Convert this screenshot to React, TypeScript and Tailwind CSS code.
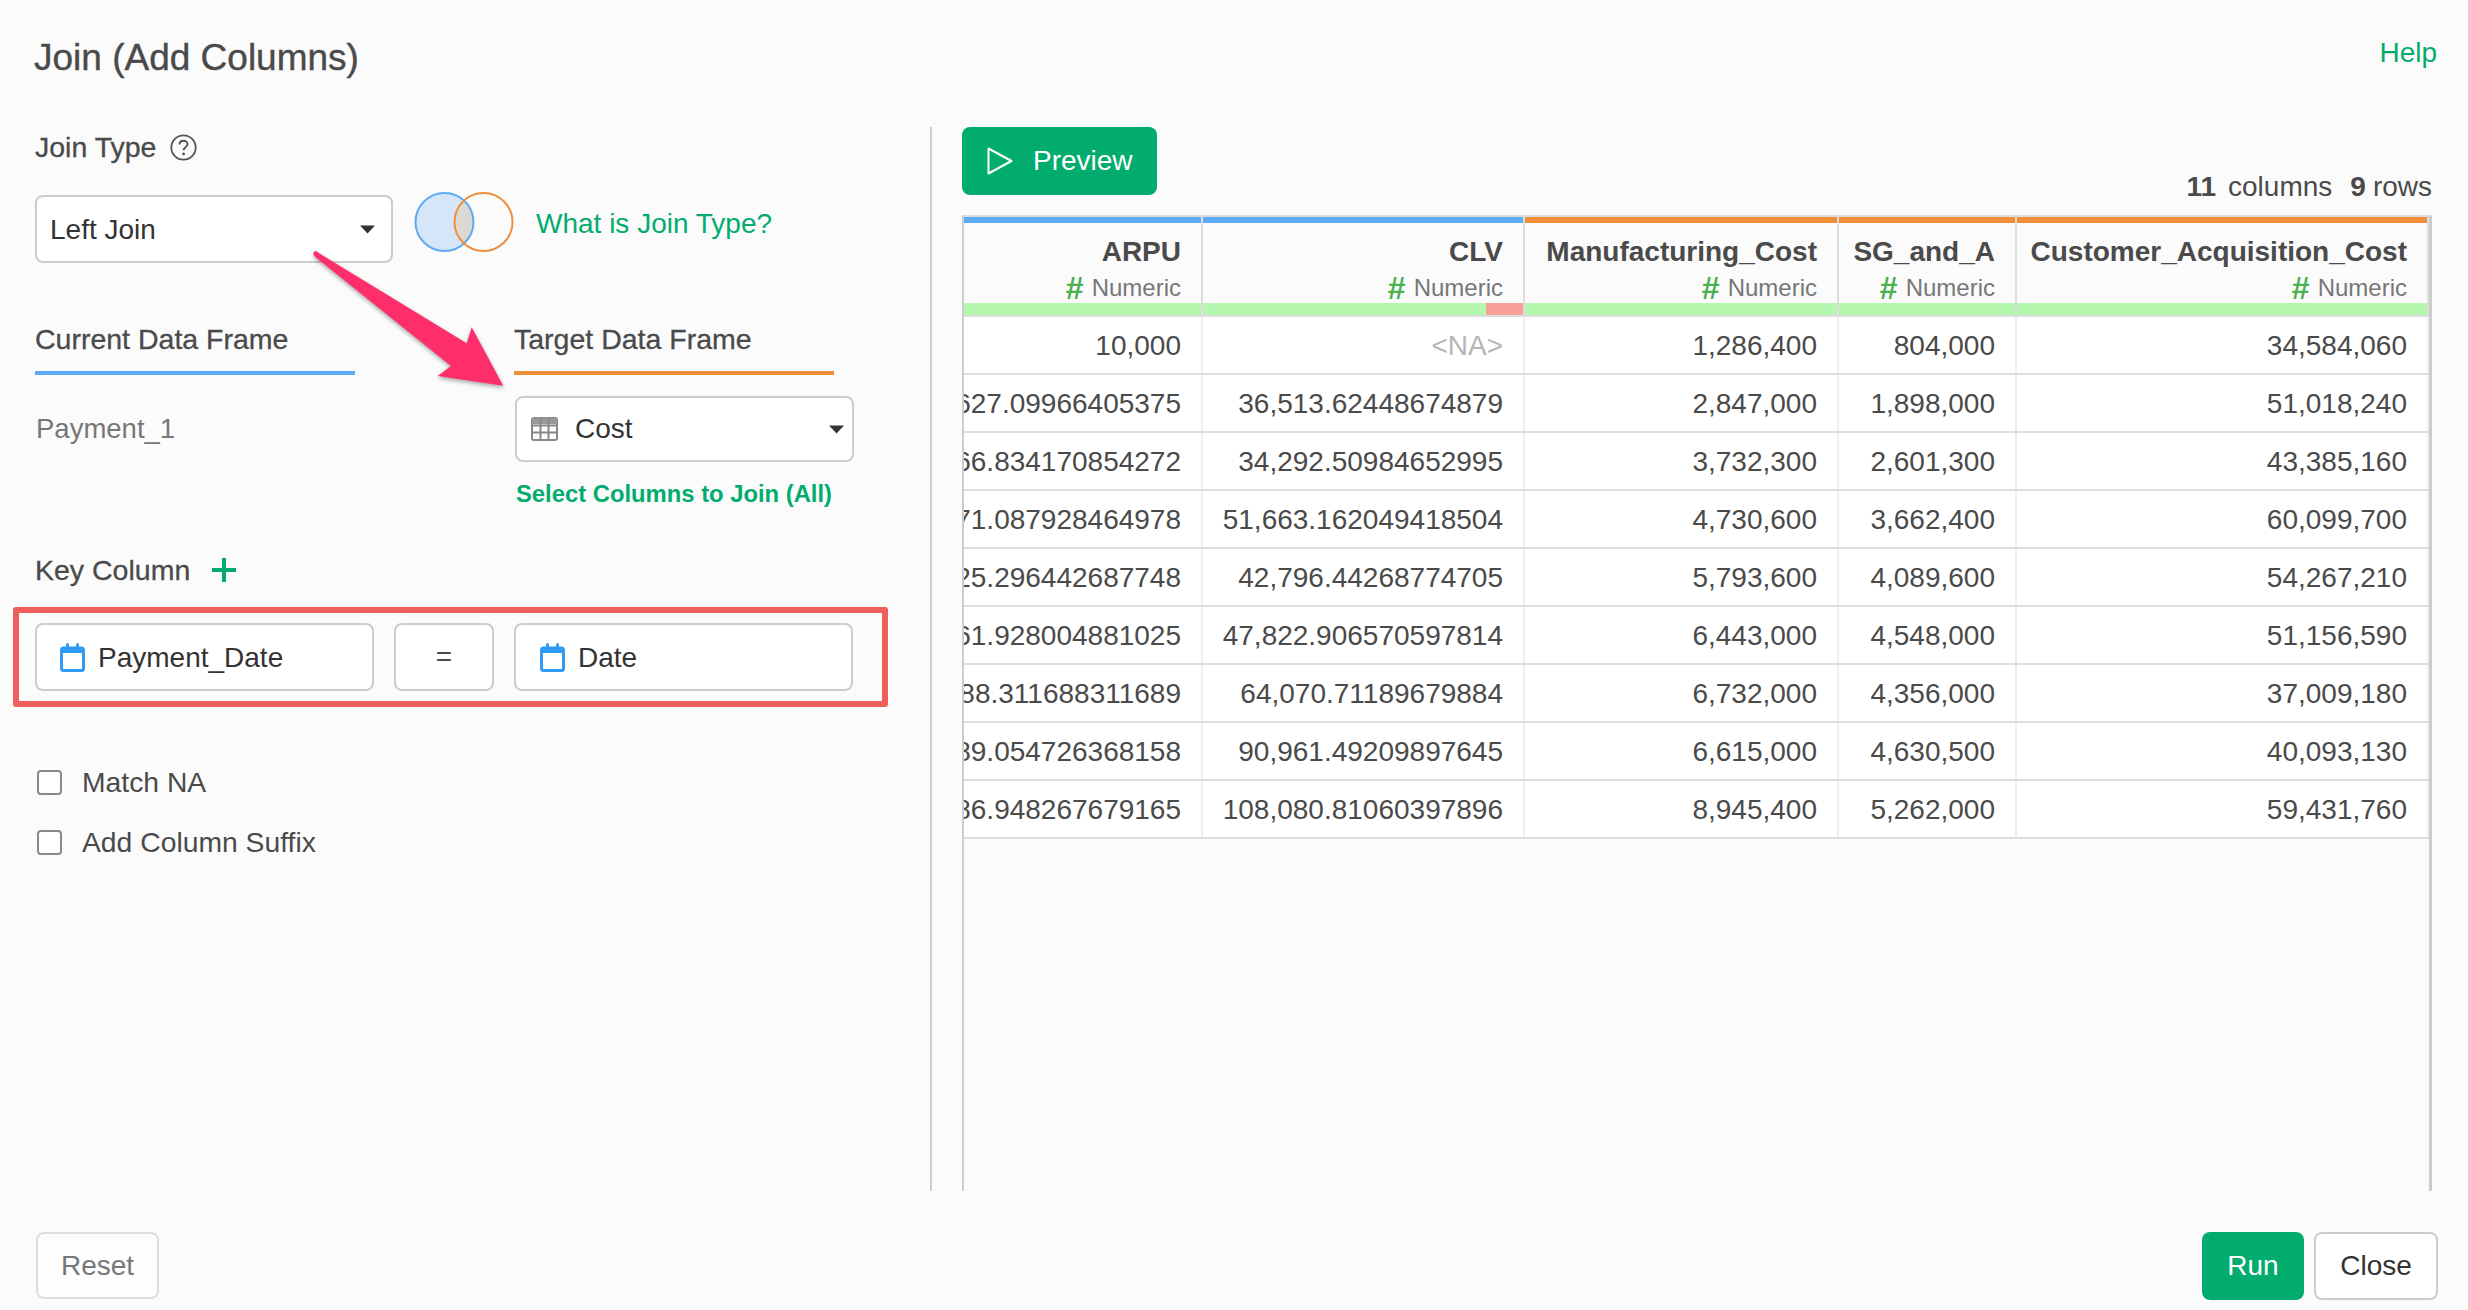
import React from 'react';

const columns = [
  { name: 'ARPU', width: 'w-[239px]', bar: 'bg-[#5dabf4]' },
  { name: 'CLV', width: 'w-[322px]', bar: 'bg-[#5dabf4]', missing: true },
  { name: 'Manufacturing_Cost', width: 'w-[314px]', bar: 'bg-[#ef8f3c]' },
  { name: 'SG_and_A', width: 'w-[178px]', bar: 'bg-[#ef8f3c]' },
  { name: 'Customer_Acquisition_Cost', width: 'w-[412px]', bar: 'bg-[#ef8f3c]' },
];

const rows = [
  ['10,000', '<NA>', '1,286,400', '804,000', '34,584,060'],
  ['627.09966405375', '36,513.62448674879', '2,847,000', '1,898,000', '51,018,240'],
  ['66.834170854272', '34,292.50984652995', '3,732,300', '2,601,300', '43,385,160'],
  ['71.087928464978', '51,663.162049418504', '4,730,600', '3,662,400', '60,099,700'],
  ['25.296442687748', '42,796.44268774705', '5,793,600', '4,089,600', '54,267,210'],
  ['61.928004881025', '47,822.906570597814', '6,443,000', '4,548,000', '51,156,590'],
  ['88.311688311689', '64,070.71189679884', '6,732,000', '4,356,000', '37,009,180'],
  ['89.054726368158', '90,961.49209897645', '6,615,000', '4,630,500', '40,093,130'],
  ['86.948267679165', '108,080.81060397896', '8,945,400', '5,262,000', '59,431,760'],
];

function Caret() {
  return (
    <svg width="15" height="9" viewBox="0 0 15 9" className="shrink-0">
      <path d="M0 0.5H15L7.5 8.5Z" fill="#333333" />
    </svg>
  );
}

function CalendarIcon() {
  return (
    <svg width="25" height="29" viewBox="0 0 25 29" className="shrink-0">
      <rect x="1.5" y="5" width="22" height="22.5" rx="2" fill="none" stroke="#2f9bf5" strokeWidth="3" />
      <rect x="1" y="4" width="23" height="6" rx="1.5" fill="#2f9bf5" />
      <rect x="6" y="0" width="3" height="6" rx="1.5" fill="#2f9bf5" />
      <rect x="16" y="0" width="3" height="6" rx="1.5" fill="#2f9bf5" />
    </svg>
  );
}

function TableIcon() {
  return (
    <svg width="27" height="24" viewBox="0 0 27 24" className="shrink-0">
      <rect x="1" y="1" width="25" height="22" rx="2" fill="none" stroke="#888888" strokeWidth="2" />
      <rect x="1" y="1" width="25" height="6" fill="#999999" />
      <path d="M9.5 1V23M17.5 1V23M1 8.5H26M1 15.5H26" stroke="#888888" strokeWidth="2" fill="none" />
    </svg>
  );
}

function KeyBox({ label, width, pad }: { label: string; width: string; pad: string }) {
  return (
    <div className={`${width} ${pad} h-[68px] flex items-center gap-[13px] bg-white border-2 border-[#cccccc] rounded-[8px] text-[#333333]`}>
      <CalendarIcon />
      <span className="pt-[2px]">{label}</span>
    </div>
  );
}

function Check({ label }: { label: string }) {
  return (
    <div className="h-[26px] flex items-center gap-[20px] pl-[2px] text-[28.3px] text-[#4a4a4a]">
      <div className="w-[25px] h-[25px] bg-white border-2 border-[#888888] rounded-[4px]" />
      <span>{label}</span>
    </div>
  );
}

export default function App() {
  return (
    <div className="relative w-[2468px] h-[1310px] overflow-hidden flex flex-col bg-[#fbfbfb] [font-family:Liberation_Sans,sans-serif] text-[28px] leading-[32px] text-[#4a4a4a]">
      {/* Header */}
      <div className="h-[127px] flex items-start justify-between pl-[34px] pr-[31px]">
        <div className="mt-[36px] text-[37px] leading-[44px] [-webkit-text-stroke:0.4px_#4a4a4a]">Join (Add Columns)</div>
        <div className="mt-[37px] text-[#02ac6e]">Help</div>
      </div>

      <div className="h-[1064px] flex">
        {/* Left: join settings */}
        <div className="w-[932px] border-r-2 border-[#cccccc] pl-[35px]">
          <div className="h-[40px] flex items-center gap-[14px] text-[28.5px] [-webkit-text-stroke:0.3px_#4a4a4a]">
            <span>Join Type</span>
            <svg width="27" height="27" viewBox="0 0 27 27" className="shrink-0">
              <circle cx="13.5" cy="13.5" r="12.2" fill="none" stroke="#555555" strokeWidth="1.8" />
              <path d="M9.5 10.6c0-2.4 1.800-3.800 4-3.800s4 1.400 4 3.400c0 1.700-1 2.500-2.200 3.300-1.100.7-1.700 1.300-1.700 2.800" fill="none" stroke="#555555" strokeWidth="2" />
              <circle cx="13.600" cy="20" r="1.400" fill="#555555" />
            </svg>
          </div>

          <div className="mt-[28px] h-[68px] flex items-center">
            <div className="w-[358px] h-[68px] flex items-center justify-between pl-[13px] pr-[16px] bg-white border-2 border-[#cccccc] rounded-[8px] text-[#333333]">
              <span className="pt-[1px]">Left Join</span>
              <Caret />
            </div>
            <svg width="100" height="62" viewBox="0 0 100 62" className="ml-[21px] -mt-[14px] shrink-0">
              <circle cx="30.500" cy="31" r="29" fill="#d6e6f9" />
              <path d="M50 9.500a29 29 0 0 1 0 43a29 29 0 0 1 0-43Z" fill="#dcd8d2" />
              <circle cx="30.500" cy="31" r="29" fill="none" stroke="#5dabf4" strokeWidth="2" />
              <circle cx="69.500" cy="31" r="29" fill="none" stroke="#ef8f3c" strokeWidth="2" />
            </svg>
            <span className="ml-[22px] -mt-[10px] text-[#02ac6e]">What is Join Type?</span>
          </div>

          <div className="mt-[62px] flex text-[28.5px] leading-[28px]">
            <div className="w-[320px] h-[50px] border-b-4 border-[#5dabf4] [-webkit-text-stroke:0.3px_#4a4a4a]">Current Data Frame</div>
            <div className="ml-[159px] w-[320px] h-[50px] border-b-4 border-[#ef8f3c] [-webkit-text-stroke:0.3px_#4a4a4a]">Target Data Frame</div>
          </div>

          <div className="mt-[21px] flex">
            <div className="w-[480px] h-[66px] flex items-center pl-[1px] text-[27.5px] text-[#777777]">Payment_1</div>
            <div className="w-[339px] h-[66px] flex items-center justify-between pl-[14px] pr-[8px] bg-white border-2 border-[#cccccc] rounded-[8px] text-[#333333]">
              <div className="flex items-center gap-[17px]">
                <TableIcon />
                <span>Cost</span>
              </div>
              <Caret />
            </div>
          </div>

          <div className="mt-[17px] ml-[481px] text-[23.8px] leading-[30px] font-bold text-[#02ac6e]">Select Columns to Join (All)</div>

          <div className="mt-[43px] h-[36px] flex items-center gap-[22px] text-[28.5px] [-webkit-text-stroke:0.3px_#4a4a4a]">
            <span>Key Column</span>
            <svg width="24" height="24" viewBox="0 0 24 24" className="shrink-0">
              <path d="M12 0V24M0 12H24" stroke="#02ac6e" strokeWidth="4" fill="none" />
            </svg>
          </div>

          <div className="mt-[19px] -ml-[22px] w-[875px] h-[100px] flex items-center gap-[20px] pl-[16px] border-[6px] border-[#ef5e5a] rounded-[3px]">
            <KeyBox label="Payment_Date" width="w-[339px]" pad="pl-[23px]" />
            <div className="w-[100px] h-[68px] flex items-center justify-center bg-white border-2 border-[#cccccc] rounded-[8px] text-[#4a4a4a]">=</div>
            <KeyBox label="Date" width="w-[339px]" pad="pl-[24px]" />
          </div>

          <div className="mt-[62px] flex flex-col gap-[34px]">
            <Check label="Match NA" />
            <Check label="Add Column Suffix" />
          </div>
        </div>

        {/* Right: preview table */}
        <div className="flex-1 pl-[30px] pr-[36px] flex flex-col">
          <div className="h-[88px] flex items-start justify-between">
            <div className="w-[195px] h-[68px] flex items-center gap-[20px] pl-[25px] bg-[#02ac6e] rounded-[8px] text-white">
              <svg width="26" height="28" viewBox="0 0 26 28" className="shrink-0">
                <path d="M1.500 1.500L24.500 14L1.500 26.500Z" fill="none" stroke="#ffffff" strokeWidth="2" strokeLinejoin="round" />
              </svg>
              <span>Preview</span>
            </div>
            <div className="mt-[44px] flex items-center whitespace-pre">
              <b>11</b>
              <span className="ml-[12px]">columns</span>
              <b className="ml-[18px]">9</b>
              <span className="ml-[7px]">rows</span>
            </div>
          </div>

          <div className="flex-1 flex flex-col border-l-2 border-r-[3px] border-[#cccccc] border-t-2 border-t-[#dddddd]">
            <div className="flex border-b-2 border-[#dddddd]">
              {columns.map((c) => (
                <div key={c.name} className={`${c.width} border-r-2 border-[#dddddd] flex flex-col`}>
                  <div className={`h-[6px] ${c.bar}`} />
                  <div className="h-[80px] flex flex-col items-end pr-[20px] pt-[13px] whitespace-nowrap">
                    <b className="leading-[32px]">{c.name}</b>
                    <div className="mt-[6px] flex items-center gap-[8px] text-[24px] leading-[28px] text-[#777777]">
                      <b className="text-[32px] text-[#4caf50]">#</b>
                      <span>Numeric</span>
                    </div>
                  </div>
                  <div className="h-[12px] bg-[#b6f7b0] flex justify-end">
                    {c.missing && <div className="w-[37px] bg-[#f8a19b]" />}
                  </div>
                </div>
              ))}
            </div>
            {rows.map((row, i) => (
              <div key={i} className="flex h-[58px] bg-white border-b-2 border-[#dddddd]">
                {row.map((v, j) => (
                  <div key={j} className={`${columns[j].width} border-r-2 border-[#eeeeee] flex items-center justify-end overflow-hidden pr-[20px] pt-[2px] whitespace-nowrap ${v === '<NA>' ? 'text-[#b5b5b5]' : ''}`}>
                    {v}
                  </div>
                ))}
              </div>
            ))}
          </div>
        </div>
      </div>

      {/* Footer */}
      <div className="flex-1 flex items-start justify-between pt-[41px] pl-[36px] pr-[30px]">
        <div className="w-[123px] h-[67px] flex items-center justify-center bg-[#fdfdfd] border-2 border-[#dddddd] rounded-[8px] text-[#777777]">Reset</div>
        <div className="flex gap-[10px]">
          <div className="w-[102px] h-[68px] flex items-center justify-center bg-[#02ac6e] rounded-[8px] text-white">Run</div>
          <div className="w-[124px] h-[68px] flex items-center justify-center bg-white border-2 border-[#cccccc] rounded-[8px] text-[#333333]">Close</div>
        </div>
      </div>

      {/* Annotation arrow */}
      <svg width="220" height="160" viewBox="0 0 220 160" className="absolute left-[300px] top-[240px] drop-shadow-[0_2px_2px_rgba(0,0,0,0.35)]">
        <path d="M18.300 12.700L166.700 103.300L171.700 87.300L203.300 145.700L137.700 136L151 126L15 16.700Q12 13 14.500 11.500Q16.500 10.800 18.300 12.700Z" fill="#fe2e6b" />
      </svg>
    </div>
  );
}
